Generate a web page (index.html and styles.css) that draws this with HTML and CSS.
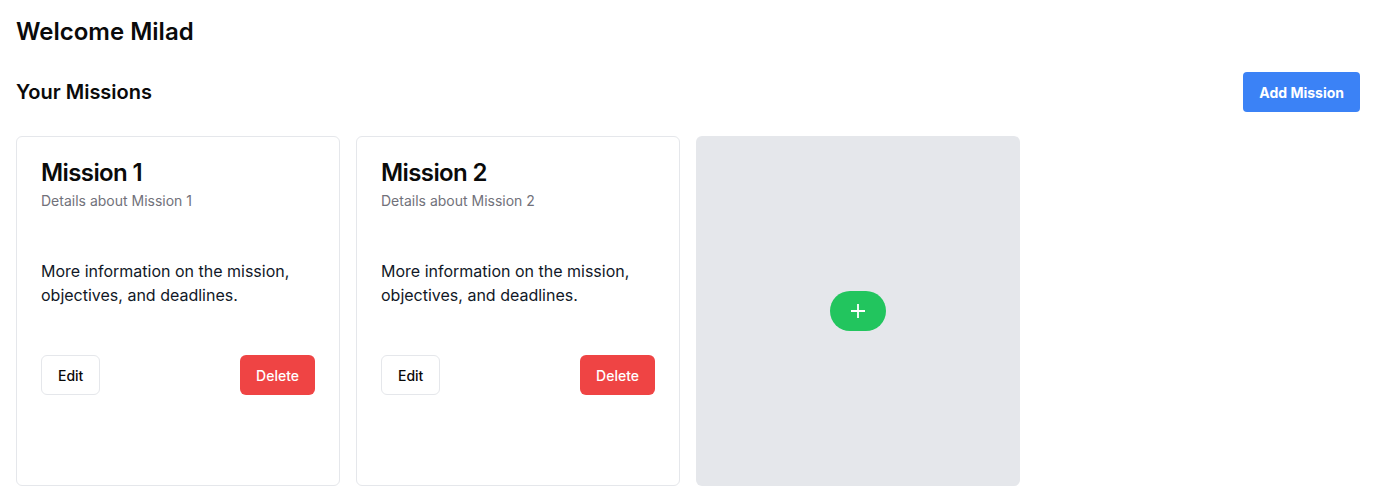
FILE: index.html
```html
<!DOCTYPE html>
<html lang="en">
<head>
<meta charset="utf-8">
<title>Missions</title>
<link rel="stylesheet" href="styles.css">
</head>
<body>
<main class="page">
  <h1 class="welcome">Welcome Milad</h1>
  <div class="section-head">
    <h2 class="section-title">Your Missions</h2>
    <button class="btn btn-blue">Add Mission</button>
  </div>
  <div class="grid">
    <div class="card">
      <div class="card-header">
        <h3 class="card-title">Mission 1</h3>
        <p class="card-desc">Details about Mission 1</p>
      </div>
      <div class="card-content">
        <p>More information on the mission, objectives, and deadlines.</p>
      </div>
      <div class="card-footer">
        <button class="btn btn-outline">Edit</button>
        <button class="btn btn-red">Delete</button>
      </div>
    </div>
    <div class="card">
      <div class="card-header">
        <h3 class="card-title">Mission 2</h3>
        <p class="card-desc">Details about Mission 2</p>
      </div>
      <div class="card-content">
        <p>More information on the mission, objectives, and deadlines.</p>
      </div>
      <div class="card-footer">
        <button class="btn btn-outline">Edit</button>
        <button class="btn btn-red">Delete</button>
      </div>
    </div>
    <div class="add-card">
      <button class="btn-plus" aria-label="Add">
        <svg width="16" height="16" viewBox="0 0 16 16" fill="none" stroke="#fff" stroke-width="1.8" stroke-linecap="butt"><path d="M8 1v14M1 8h14"/></svg>
      </button>
    </div>
  </div>
</main>
</body>
</html>
```
FILE: styles.css
```css
* { box-sizing: border-box; }
html, body { margin: 0; padding: 0; background: #fff; }
body {
  font-family: Inter, "Liberation Sans", Arial, sans-serif;
  color: #0a0a0a;
}
.page { padding: 16px; }
.welcome {
  margin: 0;
  font-size: 24px;
  line-height: 32px;
  font-weight: 600;
}
.section-head {
  margin-top: 24px;
  margin-bottom: 24px;
  display: flex;
  align-items: center;
  justify-content: space-between;
}
.section-title {
  margin: 0;
  font-size: 20px;
  line-height: 28px;
  font-weight: 600;
}
.btn {
  font-family: inherit;
  height: 40px;
  padding: 0 16px;
  border-radius: 6px;
  font-size: 14px;
  font-weight: 500;
  border: none;
  cursor: pointer;
}
.btn-blue {
  background: #3b82f6;
  color: #fff;
  font-weight: 700;
  border-radius: 4px;
}
.btn-outline {
  background: #fff;
  border: 1px solid #e5e7eb;
  color: #0a0a0a;
}
.btn-red {
  background: #ef4444;
  color: #fff;
}
.grid {
  display: grid;
  grid-template-columns: repeat(4, 1fr);
  gap: 16px;
}
.card {
  height: 350px;
  border: 1px solid #e5e7eb;
  border-radius: 6px;
  background: #fff;
}
.card-header {
  padding: 24px;
  display: flex;
  flex-direction: column;
  gap: 6px;
}
.card-title {
  margin: 0;
  font-size: 24px;
  line-height: 24px;
  font-weight: 600;
  letter-spacing: -0.6px;
}
.card-desc {
  margin: 0;
  font-size: 14px;
  line-height: 20px;
  color: #71717a;
}
.card-content {
  padding: 24px;
}
.card-content p {
  margin: 0;
  font-size: 16px;
  line-height: 24px;
  color: #111827;
}
.card-footer {
  padding: 24px;
  display: flex;
  justify-content: space-between;
  align-items: center;
}
.add-card {
  height: 350px;
  background: #e5e7eb;
  border-radius: 6px;
  display: flex;
  align-items: center;
  justify-content: center;
}
.btn-plus {
  width: 56px;
  height: 40px;
  border-radius: 20px;
  border: none;
  background: #22c55e;
  display: flex;
  align-items: center;
  justify-content: center;
  padding: 0;
}
```
